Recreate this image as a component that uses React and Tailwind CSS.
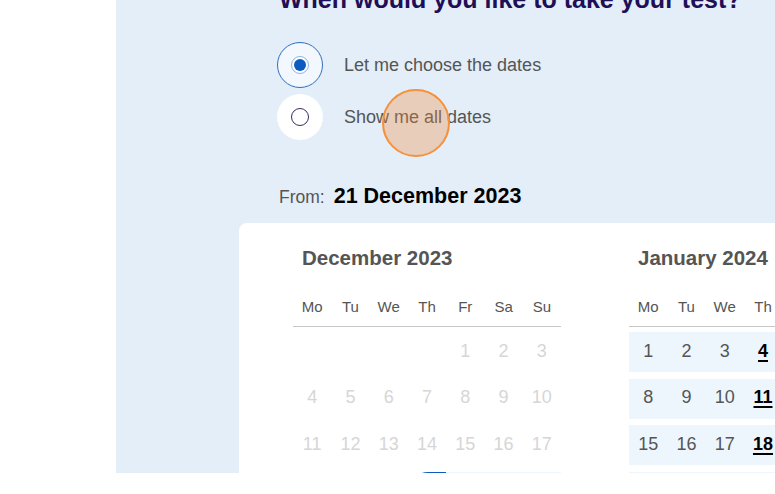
const DEC_WEEKS = [
  [null, null, null, null, 1, 2, 3],
  [4, 5, 6, 7, 8, 9, 10],
  [11, 12, 13, 14, 15, 16, 17],
  [18, 19, 20, 21, 22, 23, 24],
];

const JAN_WEEKS = [
  [1, 2, 3, 4, 5, 6, 7],
  [8, 9, 10, 11, 12, 13, 14],
  [15, 16, 17, 18, 19, 20, 21],
  [22, 23, 24, 25, 26, 27, 28],
];

const DAYS = ['Mo', 'Tu', 'We', 'Th', 'Fr', 'Sa', 'Su'];

// first selectable date is 21 Dec, Thursdays in range are test days
const DayCell = ({ day, month, col }) => {
  if (day === null) return <div />;
  if (month === 'dec' && day < 21) {
    return <div className="flex items-center justify-center pb-[2px] text-[18px] text-[#d6d6d6]">{day}</div>;
  }
  if (month === 'dec' && day === 21) {
    return <div className="flex items-center justify-center rounded-l-[20px] bg-[#0b5cc0] text-[18px] font-bold text-white">{day}</div>;
  }
  const isThursday = col === 3;
  return (
    <div className="flex items-center justify-center bg-[#edf5fd] pb-[2px]">
      {isThursday ? (
        <span className="text-[18px] font-bold text-black underline underline-offset-[3px] decoration-2">{day}</span>
      ) : (
        <span className="text-[18px] text-[#555]">{day}</span>
      )}
    </div>
  );
};

const Month = ({ title, weeks, month }) => (
  <div className="w-[268px] shrink-0">
    <h3 className="ml-[9px] text-[20.5px] font-bold leading-[24px] text-[#555]">{title}</h3>
    <div className="mt-[18px] grid h-[39px] grid-cols-7 items-center border-b border-[#c8c8c8] text-[15px] leading-[20px] text-[#555]">
      {DAYS.map(d => (
        <span key={d} className="text-center">{d}</span>
      ))}
    </div>
    <div className="mt-[5px] flex flex-col gap-[6.5px]">
      {weeks.map((week, i) => (
        <div key={i} className="grid h-[40px] grid-cols-7">
          {week.map((day, col) => (
            <DayCell key={col} day={day} month={month} col={col} />
          ))}
        </div>
      ))}
    </div>
  </div>
);

export default function App() {
  return (
    <div className="relative h-[494px] w-[775px] overflow-hidden bg-white font-['Liberation_Sans',Arial,sans-serif]">
      <div className="ml-[116px] h-[473px] overflow-hidden bg-[#e3eef8] pl-[123px]">
        <div className="pl-[40px]">
          <h1 className="-mt-[16px] whitespace-nowrap text-[25px] font-bold leading-[30px] text-[#200f57]">
            When would you like to take your test?
          </h1>

          <div className="-ml-[2px] mt-[28px] flex flex-col gap-[6px]">
            <label className="flex items-center gap-[21px]">
              <span className="flex h-[46px] w-[46px] items-center justify-center rounded-full border border-[#2f6fbf] bg-[#f2f8fd]">
                <span className="flex h-[18px] w-[18px] items-center justify-center rounded-full border border-[#8fb4e0] bg-white">
                  <span className="h-[12px] w-[12px] rounded-full bg-[#0b5cc0]" />
                </span>
              </span>
              <span className="text-[18px] text-[#555]">Let me choose the dates</span>
            </label>
            <label className="flex items-center gap-[21px]">
              <span className="flex h-[46px] w-[46px] items-center justify-center rounded-full bg-white">
                <span className="h-[18px] w-[18px] rounded-full border border-[#3d2a66] bg-white" />
              </span>
              <span className="text-[18px] text-[#555]">Show me all dates</span>
            </label>
          </div>

          <div className="mt-[40px] flex h-[26px] items-baseline gap-[9px]">
            <span className="text-[17.5px] text-[#555]">From:</span>
            <span className="text-[21.5px] font-bold text-black">21 December 2023</span>
          </div>
        </div>

        <div className="mt-[17px] w-[720px] rounded-[8px] bg-white pl-[54px] pt-[23px]">
          <div className="flex gap-[68px]">
            <Month title="December 2023" weeks={DEC_WEEKS} month="dec" />
            <Month title="January 2024" weeks={JAN_WEEKS} month="jan" />
          </div>
        </div>
      </div>

      {/* click marker */}
      <div className="absolute left-[382px] top-[89px] h-[68px] w-[68px] rounded-full border-2 border-[#f5913a] bg-[rgba(240,140,60,0.33)]" />
    </div>
  );
}
